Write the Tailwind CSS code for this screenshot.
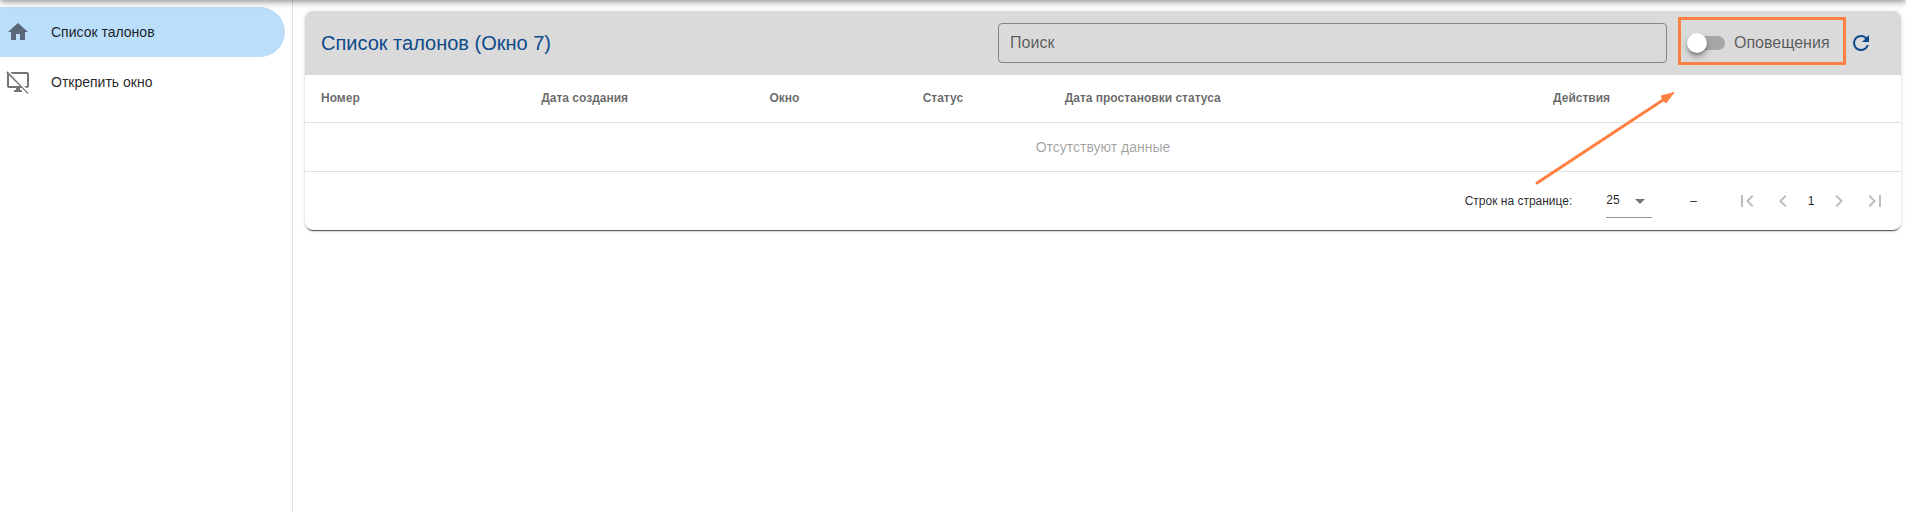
<!DOCTYPE html>
<html lang="ru">
<head>
  <meta charset="UTF-8" />
  <meta name="viewport" content="width=device-width, initial-scale=1.0" />
  <title>Список талонов</title>
  <script src="https://cdn.jsdelivr.net/npm/@tailwindcss/browser@4"></script>
</head>
<body class="min-h-screen overflow-x-hidden bg-white font-['Liberation_Sans',Arial,sans-serif] text-black/87">

  <!-- App bar, only its shadow reaches the page -->
  <header class="relative z-10 -mt-16 h-16 bg-white shadow-[0_2px_4px_-1px_rgba(0,0,0,0.2),0_4px_5px_0_rgba(0,0,0,0.14),0_1px_10px_0_rgba(0,0,0,0.12)]"></header>

  <div class="flex min-h-screen">

    <!-- Sidebar -->
    <nav class="w-[293px] shrink-0 border-r border-black/12 pt-[7px] pr-[7px] text-sm">
      <a href="#" class="flex h-[50px] items-center gap-[21px] rounded-r-full bg-[#bbdefb] pl-[6px]">
        <svg class="size-6 fill-[#586879]" viewBox="0 0 24 24"><path d="M10 20v-6h4v6h5v-8h3L12 3 2 12h3v8h5z" /></svg>
        Список талонов
      </a>
      <a href="#" class="flex h-[50px] items-center gap-[21px] pl-[6px]">
        <svg class="size-6 fill-[#757575]" viewBox="0 0 24 24"><path d="M23 4v12c0 1.100-.9 2-2 2h-.66l-2-2H21V4H6.340l-2-2H21c1.100 0 2 .9 2 2zm-5.520 14l5.260 5.270L21.460 23.700l-5.700-5.700H14v2h2v2H8v-2h2v-2H3c-1.100 0-2-.9-2-2V4l.06-.7L.2 2.440 1.470 1.170 17.480 18zM13.760 16L3 5.240V16h10.760z" /></svg>
        Открепить окно
      </a>
    </nav>

    <!-- Tickets card -->
    <main class="min-w-0 flex-1 pt-[11px] pr-[5px] pl-3">
      <section class="rounded-lg shadow-[0_3px_1px_-2px_rgba(0,0,0,0.5),0_1px_1px_0_rgba(0,0,0,0.3),0_1px_5px_0_rgba(0,0,0,0.12)]">
        <div class="flex h-16 items-center rounded-t-lg bg-[#dadada] pr-7 pl-4">
          <h1 class="flex-1 text-xl text-[#0d4a8b]">Список талонов (Окно 7)</h1>
          <input type="search" aria-label="Поиск" placeholder="Поиск" class="h-10 w-[43.1%] rounded border border-[#858585] px-[11px] text-base placeholder:text-black/60" />
          <div class="relative ml-[11px] flex w-[168px] items-center pl-[11px]">
            <input id="alerts" type="checkbox" role="switch" class="relative h-3.5 w-9 appearance-none rounded-full bg-[#a6a6a6] before:absolute before:-top-[3px] before:-left-0.5 before:size-5 before:rounded-full before:bg-white before:shadow-md before:shadow-black/40 checked:before:left-[18px]" />
            <label for="alerts" class="ml-[9px] text-base text-black/60">Оповещения</label>
            <!-- Highlight frame -->
            <div class="pointer-events-none absolute inset-x-0 -top-3.5 h-12 border-3 border-[#ff8040]"></div>
          </div>
          <button aria-label="Обновить" class="ml-[3px] size-6">
            <svg class="size-6 fill-[#0d4a8b]" viewBox="0 0 24 24"><path d="M17.650 6.350A7.958 7.958 0 0 0 12 4a8 8 0 1 0 7.730 10h-2.080A6 6 0 1 1 12 6c1.660 0 3.140.69 4.220 1.780L13 11h7V4l-2.350 2.350z" /></svg>
          </button>
        </div>

        <table class="w-full table-fixed text-left">
          <thead>
            <tr class="h-[47px] border-b border-black/12 text-xs text-black/60">
              <th class="w-[13.8%] px-4 font-bold">Номер</th>
              <th class="w-[14.3%] px-4 font-bold">Дата создания</th>
              <th class="w-[9.6%] px-4 font-bold">Окно</th>
              <th class="w-[8.9%] px-4 font-bold">Статус</th>
              <th class="w-[30.6%] px-4 font-bold">Дата простановки статуса</th>
              <th class="px-4 font-bold">Действия</th>
            </tr>
          </thead>
          <tbody>
            <tr class="h-[49px] border-b border-black/12">
              <td colspan="6" class="text-center text-sm text-black/38">Отсутствуют данные</td>
            </tr>
          </tbody>
        </table>

        <!-- Pagination -->
        <div class="flex h-[58px] items-center justify-end pr-2 text-xs">
          <label for="rows">Строк на странице:</label>
          <div class="relative ml-[34px]">
            <select id="rows" class="h-[34px] w-[46px] appearance-none border-b border-black/42">
              <option>25</option>
              <option>50</option>
            </select>
            <svg class="pointer-events-none absolute top-[5px] right-0 size-6 fill-black/54" viewBox="0 0 24 24"><path d="M7 10l5 5 5-5z" /></svg>
          </div>
          <span class="mr-8 ml-[38px]">–</span>
          <button aria-label="Первая страница" disabled class="flex w-9 justify-center">
            <svg class="size-6 fill-black/26" viewBox="0 0 24 24"><path d="M18.410 16.590L13.820 12l4.590-4.590L17 6l-6 6 6 6zM6 6h2v12H6z" /></svg>
          </button>
          <button aria-label="Предыдущая страница" disabled class="flex w-9 justify-center">
            <svg class="size-6 fill-black/26" viewBox="0 0 24 24"><path d="M15.410 7.410L14 6l-6 6 6 6 1.410-1.410L10.830 12z" /></svg>
          </button>
          <span class="w-5 text-center">1</span>
          <button aria-label="Следующая страница" disabled class="flex w-9 justify-center">
            <svg class="size-6 fill-black/26" viewBox="0 0 24 24"><path d="M10 6L8.590 7.410 13.170 12l-4.580 4.590L10 18l6-6z" /></svg>
          </button>
          <button aria-label="Последняя страница" disabled class="flex w-9 justify-center">
            <svg class="size-6 fill-black/26" viewBox="0 0 24 24"><path d="M5.590 7.410L10.180 12l-4.590 4.590L7 18l6-6-6-6zM16 6h2v12h-2z" /></svg>
          </button>
        </div>
      </section>
    </main>
  </div>

  <!-- Arrow pointing at the alerts switch -->
  <svg class="pointer-events-none absolute top-[90px] right-[230px] h-24 w-[143px]" viewBox="0 0 143 96">
    <path d="M4 93L130 10" stroke="#ff8040" stroke-width="3" stroke-linecap="round" />
    <path d="M141 2.500L128 6 130 10 133 13z" fill="#ff8040" stroke="#ff8040" />
  </svg>
</body>
</html>
